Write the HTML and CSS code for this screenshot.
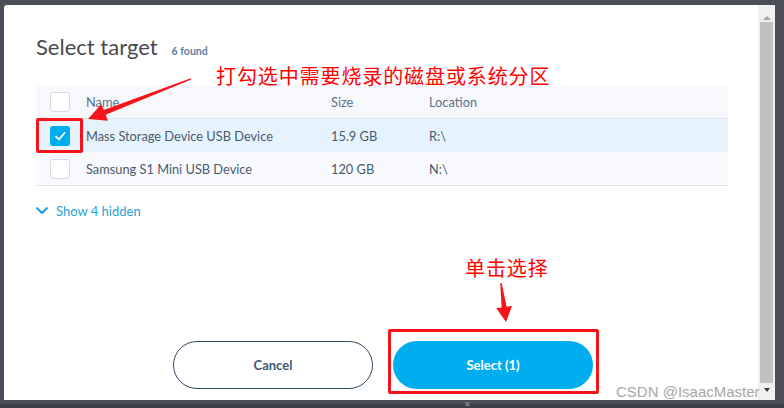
FILE: index.html
```html
<!DOCTYPE html>
<html>
<head>
<meta charset="utf-8">
<link rel="stylesheet" href="styles.css">
</head>
<body>
<div class="screen">
  <div class="window">
    <div class="dialog">
      <div class="head">
        <h1 class="title">Select target</h1>
        <span class="count">6 found</span>
      </div>
      <div class="targets">
        <div class="row header">
          <span class="cell"><span class="check"></span></span>
          <span class="cell">Name</span>
          <span class="cell">Size</span>
          <span class="cell">Location</span>
        </div>
        <div class="row selected">
          <span class="cell"><span class="check on"><svg viewBox="0 0 20 20" width="20" height="20"><polyline points="6,10.5 9,13.5 14.5,7" fill="none" stroke="#fff" stroke-width="1.8" stroke-linecap="round" stroke-linejoin="round"/></svg></span></span>
          <span class="cell">Mass Storage Device USB Device</span>
          <span class="cell">15.9 GB</span>
          <span class="cell">R:\</span>
        </div>
        <div class="row last">
          <span class="cell"><span class="check"></span></span>
          <span class="cell">Samsung S1 Mini USB Device</span>
          <span class="cell">120 GB</span>
          <span class="cell">N:\</span>
        </div>
      </div>
      <div class="show-hidden">
        <svg class="chev" viewBox="0 0 12 8" width="12" height="8"><polyline points="1.2,1.2 6,6 10.8,1.2" fill="none" stroke="#2a9fd8" stroke-width="2.2" stroke-linecap="round" stroke-linejoin="round"/></svg>
        <span>Show 4 hidden</span>
      </div>
      <div class="actions">
        <button class="btn cancel">Cancel</button>
        <button class="btn select">Select (1)</button>
      </div>
    </div>
    <div class="scrollbar">
      <span class="arrow-up"></span>
      <span class="thumb"></span>
      <span class="arrow-down"></span>
    </div>
  </div>
  <div class="bottombar"><span class="grip">✕</span></div>

  <div class="note note1">打勾选中需要烧录的磁盘或系统分区</div>
  <div class="note note2">单击选择</div>
  <div class="mark mark1"></div>
  <div class="mark mark2"></div>
  <svg class="arrows" viewBox="0 0 784 408" width="784" height="408">
    <polygon fill="#f5141a" points="88,119 108,120.8 105.6,114.7 191.3,79.6 190.7,78.3 103.8,110.1 101.4,104"/>
    <polygon fill="#f5141a" points="506,322 512,306.1 506.6,306.8 501.7,282.9 500.3,283.1 501.6,307.4 496.2,308.1"/>
  </svg>
  <div class="watermark">CSDN @IsaacMaster</div>
</div>
</body>
</html>
```
FILE: styles.css
```css
* { box-sizing: border-box; }
html, body { margin: 0; padding: 0; }
body {
  width: 784px;
  height: 408px;
  overflow: hidden;
  background: #4b4e56;
  font-family: Lato, "Noto Sans", sans-serif;
}
.screen {
  position: relative;
  width: 784px;
  height: 408px;
  display: flex;
  flex-direction: column;
}
.window {
  margin: 5px 9px 0 4px;
  height: 395px;
  display: flex;
  background: #fff;
  border-top-left-radius: 3px;
}
.dialog {
  flex: 1;
  display: flex;
  flex-direction: column;
  padding: 0 30px 11px 32px;
}
.head {
  height: 81px;
  padding-top: 29px;
  display: flex;
  align-items: baseline;
  gap: 14px;
}
.title {
  margin: 0;
  font-size: 22px;
  line-height: 26px;
  font-weight: 400;
  color: #474a4f;
}
.count {
  font-size: 10.5px;
  font-weight: 700;
  color: #5b7ea6;
}
.targets {
  display: flex;
  flex-direction: column;
}
.row {
  display: grid;
  grid-template-columns: 36px 245px 98px 1fr;
  align-items: center;
  height: 33px;
  padding-left: 14px;
  font-size: 12.8px;
  color: #4a5b70;
  background: #f8fafd;
}
.row.header {
  height: 33px;
  border-bottom: 1px solid #dfe5ee;
  background: #f6f8fc;
  color: #5d7189;
}
.row.selected { background: #e6f3fc; }
.row.last { border-bottom: 1px solid #dfe5ee; height: 34px; }
.cell { white-space: nowrap; }
.check {
  display: block;
  width: 20px;
  height: 20px;
  border: 1px solid #d6dce6;
  border-radius: 3px;
  background: #fff;
}
.check.on {
  border: none;
  background: #00aeef;
}
.check svg { display: block; }
.show-hidden {
  margin-top: 17px;
  display: flex;
  align-items: center;
  gap: 8px;
  font-size: 13px;
  line-height: 16px;
  color: #2a9fd8;
}
.chev { display: block; }
.actions {
  margin-top: auto;
  display: flex;
  justify-content: center;
  gap: 20px;
  padding-left: 2px;
}
.btn {
  width: 200px;
  height: 48px;
  border-radius: 24px;
  font-family: Lato, "Noto Sans", sans-serif;
  font-size: 13px;
  font-weight: 700;
}
.btn.cancel {
  background: #fff;
  border: 1px solid #2f4b68;
  color: #3d5774;
}
.btn.select {
  background: #00aeef;
  border: none;
  color: #fff;
}
.scrollbar {
  width: 17px;
  background: #f0f0f0;
  display: flex;
  flex-direction: column;
  align-items: center;
  padding: 11px 0 8px;
}
.arrow-up {
  width: 0; height: 0;
  border-left: 4px solid transparent;
  border-right: 4px solid transparent;
  border-bottom: 4px solid #a3a3a3;
}
.thumb {
  margin-top: 2px;
  width: 13px;
  height: 365px;
  background: #c1c1c1;
}
.arrow-down {
  margin-top: 5px;
  width: 0; height: 0;
  border-left: 3px solid transparent;
  border-right: 3px solid transparent;
  border-top: 4px solid #3c3c3c;
}
.bottombar {
  flex: 1;
  background: linear-gradient(#4b4e56 0 4px, #3d4046 4px);
  position: relative;
}
.grip {
  position: absolute;
  left: 464px;
  top: 1px;
  font-size: 8px;
  line-height: 8px;
  color: #9a9da3;
  font-family: "DejaVu Sans", sans-serif;
}
.note {
  position: absolute;
  font-family: "Noto Sans CJK SC", sans-serif;
  font-size: 20px;
  line-height: 20px;
  letter-spacing: 0.9px;
  color: #ff0000;
  white-space: nowrap;
}
.note1 { left: 216px; top: 66px; }
.note2 { left: 465px; top: 258px; }
.mark {
  position: absolute;
  border: 3px solid #f5141a;
  border-radius: 2px;
}
.mark1 { left: 36px; top: 118px; width: 47px; height: 35px; }
.mark2 { left: 388px; top: 329px; width: 211px; height: 65px; }
.arrows {
  position: absolute;
  left: 0;
  top: 0;
  pointer-events: none;
}
.watermark {
  position: absolute;
  left: 616px;
  top: 383px;
  font-family: "Liberation Sans", Arial, sans-serif;
  font-size: 15px;
  line-height: 18px;
  color: #a6a6a6;
  white-space: nowrap;
}
```
